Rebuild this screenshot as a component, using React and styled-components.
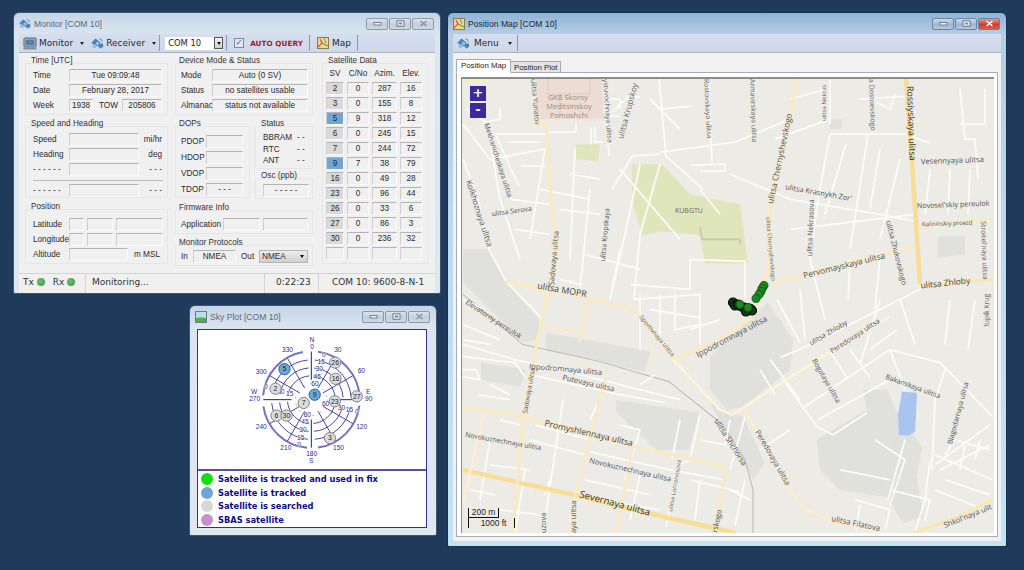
import React from "react";
import styled, { createGlobalStyle } from "styled-components";

const GlobalStyle = createGlobalStyle`
  html, body { margin: 0; padding: 0; }
  body {
    width: 1024px;
    height: 570px;
    overflow: hidden;
    background: #1f3a5a;
    font-family: "Liberation Sans", Arial, sans-serif;
  }
`;

const Desktop = styled.div`
  position: relative;
  width: 1024px;
  height: 570px;
  background: #1f3a5a;
`;

const Win = styled.section`
  position: absolute;
  left: ${(p) => p.$x}px;
  top: ${(p) => p.$y}px;
  width: ${(p) => p.$w}px;
  height: ${(p) => p.$h}px;
  box-sizing: border-box;
  padding: 0 5px 5px;
  display: flex;
  flex-direction: column;
  border-radius: 6px 6px 2px 2px;
  border: 1px solid ${(p) => (p.$active ? "#16304f" : "#3d5670")};
  background: ${(p) =>
    p.$active
      ? "linear-gradient(180deg, #8fb2d6 0, #b5cde4 20px, #bfdcef 50%, #c3e4f2 100%)"
      : "linear-gradient(180deg, #c5d5e6 0, #dbe5f0 22px, #dfe8f1 100%)"};
`;

const TitleBar = styled.header`
  height: 21px;
  flex: none;
  display: flex;
  align-items: center;
  gap: 3px;
  font-size: 8.6px;
  color: ${(p) => (p.$active ? "#1b2a3a" : "#5d6b7a")};
`;

const Controls = styled.div`
  margin-left: auto;
  display: flex;
  gap: 1px;
  margin-right: 1px;
`;

const Ctl = styled.div`
  width: 22px;
  height: 12px;
  display: flex;
  align-items: center;
  justify-content: center;
  border: 1px solid ${(p) => (p.$active ? "#6a84a3" : "#8c9aab")};
  border-radius: 2px;
  box-sizing: border-box;
  background: ${(p) =>
    p.$close
      ? "linear-gradient(180deg, #e89a88, #c9402c 55%, #d9604a)"
      : p.$active
      ? "linear-gradient(180deg, #c8d9ea, #9db8d4 55%, #b3c9df)"
      : "linear-gradient(180deg, #dbe3ec, #c3cfdc 55%, #cfd9e4)"};
`;

const Toolbar = styled.div`
  height: 19px;
  flex: none;
  display: flex;
  align-items: center;
  padding-left: 4px;
  background: linear-gradient(180deg, #d5deee, #cdd8ea);
  border-bottom: 1px solid #a9b2bd;
  box-sizing: border-box;
  font-family: "DejaVu Sans", sans-serif;
  font-size: 9px;
  color: #1c2a44;
`;

const ToolItem = styled.div`
  display: flex;
  align-items: center;
  gap: ${(p) => p.$gap ?? 2}px;
  margin-left: ${(p) => p.$ml ?? 0}px;
`;

const Caret = styled.span`
  width: 0;
  height: 0;
  margin-left: 5px;
  border-left: 2.5px solid transparent;
  border-right: 2.5px solid transparent;
  border-top: 3px solid #222;
`;

const ToolSep = styled.div`
  width: 1px;
  height: 16px;
  background: #8f9aa8;
  margin-left: ${(p) => p.$ml ?? 0}px;
`;

const ComSelect = styled.div`
  width: 58px;
  height: 13px;
  margin-left: 5px;
  background: #fff;
  display: flex;
  align-items: center;
  padding-left: 3px;
  box-sizing: border-box;
  font-family: "DejaVu Sans", sans-serif;
  font-size: 8.4px;
  color: #222;
  justify-content: space-between;
`;

const DropBtn = styled.span`
  width: 9px;
  height: 12px;
  background: linear-gradient(180deg, #f4f4f4, #cfcfcf);
  border: 1px solid #555;
  box-sizing: border-box;
  display: flex;
  align-items: center;
  justify-content: center;
  &::after {
    content: "";
    border-left: 2.5px solid transparent;
    border-right: 2.5px solid transparent;
    border-top: 3px solid #111;
  }
`;

const Check = styled.span`
  width: 10px;
  height: 10px;
  box-sizing: border-box;
  border: 1px solid #7f8a9c;
  background: #dfe6f2;
  color: #33508a;
  display: flex;
  align-items: center;
  justify-content: center;
  font-size: 8px;
  line-height: 1;
  font-family: "DejaVu Sans", sans-serif;
`;

const AutoQuery = styled.span`
  font-family: "DejaVu Sans", sans-serif;
  font-weight: 700;
  font-size: 7.2px;
  color: #9c1c24;
  letter-spacing: 0.1px;
`;

const MonitorBody = styled.div`
  height: 220px;
  flex: none;
  background: #f0f0f0;
  box-sizing: border-box;
  padding: 10px 5px 0 6px;
  display: grid;
  grid-template-columns: 143px 138px 108px;
  column-gap: 7px;
  font-size: 8.2px;
  color: #2b2b2b;
`;

const Col = styled.div`
  display: flex;
  flex-direction: column;
  gap: ${(p) => p.$gap ?? 11}px;
`;

const ColRow = styled.div`
  display: flex;
  gap: 5px;
`;

const Group = styled.div`
  border: 1px solid #e6e6e6;
  box-sizing: border-box;
  height: ${(p) => p.$h}px;
  width: ${(p) => (p.$w ? `${p.$w}px` : "auto")};
  margin-left: ${(p) => p.$ml ?? 0}px;
  padding: 0 4px 0 ${(p) => p.$pl ?? 7}px;
  display: flex;
  flex-direction: column;
  gap: ${(p) => p.$rowGap ?? 2}px;
`;

const GroupTitle = styled.div`
  height: 10px;
  margin: -8px 0 ${(p) => p.$mb ?? 1}px -2px;
  line-height: 10px;
  white-space: nowrap;
  color: #333;
`;

const Row = styled.div`
  display: flex;
  align-items: center;
  height: ${(p) => p.$h ?? 13}px;
  gap: ${(p) => p.$gap ?? 0}px;
`;

const Label = styled.span`
  width: ${(p) => (p.$w ? `${p.$w}px` : "auto")};
  flex: none;
  white-space: nowrap;
  text-align: ${(p) => p.$align ?? "left"};
  margin-left: ${(p) => p.$ml ?? 0}px;
`;

const Field = styled.div`
  width: ${(p) => p.$w}px;
  height: 13px;
  flex: none;
  box-sizing: border-box;
  border-top: 1px solid #b4b4b4;
  border-left: 1px solid #cfcfcf;
  border-right: 1px solid #fafafa;
  border-bottom: 1px solid #fafafa;
  background: ${(p) => (p.$bg ? p.$bg : "#f0f0f0")};
  display: flex;
  align-items: center;
  justify-content: center;
  white-space: nowrap;
  color: #2b2b2b;
`;

const Divider = styled.div`
  height: 1px;
  background: #bcbcbc;
  margin: 2px 0 1px;
`;

const ProtoSelect = styled.div`
  width: 49px;
  height: 13px;
  margin-left: auto;
  box-sizing: border-box;
  border: 1px solid #b5b5b5;
  background: linear-gradient(180deg, #eeeeee, #cfcfcf);
  display: flex;
  align-items: center;
  justify-content: space-between;
  padding: 0 3px 0 2px;
  &::after {
    content: "";
    border-left: 2.5px solid transparent;
    border-right: 2.5px solid transparent;
    border-top: 3px solid #111;
  }
`;

const SatGrid = styled.div`
  display: grid;
  grid-template-columns: 18px 22px 25px 22px;
  column-gap: 3px;
  row-gap: 2px;
  justify-content: start;
  margin-left: -4px;
`;

const SatHead = styled.div`
  text-align: center;
  height: 11px;
  line-height: 10px;
`;

const StatusBar = styled.footer`
  flex: none;
  height: 20px;
  background: #f0f0f0;
  border-top: 1px solid #d2d2d2;
  display: flex;
  align-items: stretch;
  box-sizing: border-box;
  font-family: "DejaVu Sans", sans-serif;
  font-size: 9px;
  color: #333;
`;

const StatusCell = styled.div`
  width: ${(p) => p.$w}px;
  flex: none;
  display: flex;
  align-items: center;
  gap: 3px;
  box-sizing: border-box;
  padding-left: ${(p) => p.$pl ?? 0}px;
  padding-bottom: 3px;
  border-right: ${(p) => (p.$last ? "none" : "1px solid #d4d4d4")};
`;

const Led = styled.span`
  width: 8px;
  height: 8px;
  border-radius: 50%;
  margin-right: 5px;
  background: radial-gradient(circle at 40% 40%, #6bbf6b, #3a9440);
`;

const SkyPanel = styled.div`
  flex: 1;
  display: flex;
  flex-direction: column;
  margin: 2px 4px 2px 2px;
  background: #fff;
  border: 1px solid #3b2f96;
`;

const SkyChart = styled.svg`
  display: block;
  width: 228px;
  height: 139px;
  flex: none;
  font-family: "Liberation Sans", sans-serif;
`;

const Legend = styled.ul`
  list-style: none;
  margin: 0;
  padding: 1px 0 0 3px;
  flex: 1;
  border-top: 2px solid #5a50ac;
  display: flex;
  flex-direction: column;
  justify-content: space-around;
`;

const LegendItem = styled.li`
  display: flex;
  align-items: center;
  gap: 5px;
  height: 13px;
  font-family: "DejaVu Sans", sans-serif;
  font-weight: 700;
  font-size: 8.3px;
  color: #0d0d86;
  white-space: nowrap;
`;

const Swatch = styled.span`
  width: 12px;
  height: 12px;
  border-radius: 50%;
  background: ${(p) => p.$c};
  flex: none;
`;

const MapBody = styled.div`
  flex: 1;
  background: #f1f1f1;
  padding: 6px 3px 4px 3px;
  display: flex;
  flex-direction: column;
  min-height: 0;
`;

const Tabs = styled.div`
  display: flex;
  align-items: flex-end;
  height: 14px;
  flex: none;
  position: relative;
  z-index: 1;
`;

const Tab = styled.div`
  height: ${(p) => (p.$on ? 14 : 12)}px;
  box-sizing: border-box;
  padding: 0 ${(p) => (p.$on ? 4 : 3)}px;
  border: 1px solid #a8acb2;
  border-bottom: ${(p) => (p.$on ? "1px solid #fff" : "1px solid #a8acb2")};
  border-left: ${(p) => (p.$on ? "1px solid #a8acb2" : "none")};
  background: ${(p) => (p.$on ? "#fff" : "#e4e4e4")};
  font-size: 7.8px;
  line-height: 11px;
  color: #222;
`;

const TabPage = styled.div`
  flex: 1;
  margin-top: -1px;
  background: #fff;
  border: 1px solid #a8acb2;
  padding: 4px 3px 3px 4px;
  display: flex;
  min-height: 0;
`;

const MapFrame = styled.div`
  position: relative;
  flex: 1;
  overflow: hidden;
  background: #ecebe6;
  border-top: 2px solid #8c8c8c;
  border-left: 1px solid #8c8c8c;
`;

const MapSvg = styled.svg`
  display: block;
  width: 100%;
  height: 100%;
  font-family: "Open Sans", "Liberation Sans", sans-serif;
`;

const ZoomBtn = styled.div`
  position: absolute;
  left: 8px;
  top: ${(p) => p.$t}px;
  width: 16px;
  height: 15px;
  background: #3b2a9e;
  color: #fff;
  font-family: "DejaVu Sans", sans-serif;
  font-weight: 700;
  font-size: 13px;
  line-height: 14px;
  text-align: center;
`;

const ScaleBar = styled.div`
  position: absolute;
  left: 6px;
  bottom: 5px;
  width: 48px;
  height: 20px;
  font-size: 8.4px;
  color: #222;
`;

const ScaleTop = styled.div`
  width: 31px;
  height: 10px;
  box-sizing: border-box;
  border-left: 1px solid #111;
  border-right: 1px solid #111;
  border-bottom: 1px solid #111;
  line-height: 9px;
  text-align: center;
`;

const ScaleBottom = styled.div`
  width: 47px;
  height: 10px;
  box-sizing: border-box;
  border-left: 1px solid #111;
  border-right: 1px solid #111;
  line-height: 10px;
  text-align: center;
  padding-left: 4px;
`;

/* ---- small drawings ---- */

const SatIcon = ({ size = 13 }) => (
  <svg width={size} height={size} viewBox="0 0 14 14">
    <path d="M1 6 L5 2 L7 4 L3 8 Z" fill="#4a8cc8" stroke="#1e5a96" strokeWidth="0.6" />
    <path d="M8 9 L12 7 L13 10 L10 12 Z" fill="#4a8cc8" stroke="#1e5a96" strokeWidth="0.6" />
    <circle cx="7" cy="7" r="2.6" fill="#8cc0ea" stroke="#1e5a96" strokeWidth="0.7" />
    <path d="M5 11 Q2 11 2 9 M9 2 Q12 2 12 5" fill="none" stroke="#3b7ab8" strokeWidth="0.9" />
  </svg>
);

const PcIcon = () => (
  <svg width="14" height="13" viewBox="0 0 14 13">
    <rect x="1" y="1" width="12" height="9" rx="1" fill="#b9bec6" stroke="#555c68" />
    <rect x="2.5" y="2.5" width="9" height="6" fill="#4f7fb4" />
    <rect x="0.5" y="10.5" width="13" height="2" fill="#8a8f98" />
  </svg>
);

const MapIcon = () => (
  <svg width="12" height="12" viewBox="0 0 12 12">
    <rect x="0.5" y="0.5" width="11" height="11" fill="#f2d68c" stroke="#8a7a58" />
    <path d="M1 10 L5 6 L3 2" fill="none" stroke="#d2553a" strokeWidth="1.2" />
    <path d="M5 6 L11 9" stroke="#5aa04a" strokeWidth="1.2" />
    <path d="M7 1 L9 6" stroke="#6a8ac8" strokeWidth="1" />
  </svg>
);

const SkyIcon = () => (
  <svg width="12" height="12" viewBox="0 0 12 12">
    <rect x="0.5" y="0.5" width="11" height="11" fill="#bcdcf2" stroke="#6a7a8a" />
    <rect x="1" y="7" width="10" height="4" fill="#4fb04a" />
    <path d="M1 7 Q6 4 11 7" fill="#8ccf70" />
  </svg>
);

const WinButtons = ({ active }) => (
  <Controls>
    <Ctl $active={active}>
      <svg width="9" height="5" viewBox="0 0 9 5">
        <rect x="1" y="1.5" width="7" height="2.5" fill="#eef2f6" stroke="#55606e" strokeWidth="0.7" />
      </svg>
    </Ctl>
    <Ctl $active={active}>
      <svg width="9" height="7" viewBox="0 0 9 7">
        <rect x="1" y="0.8" width="7" height="5.4" fill="#eef2f6" stroke="#55606e" strokeWidth="0.8" />
        <rect x="2.8" y="2.5" width="3.4" height="2" fill="#7f8a98" />
      </svg>
    </Ctl>
    <Ctl $active={active} $close={active}>
      <svg width="9" height="7" viewBox="0 0 9 7">
        <path
          d="M1.5 1 L7.5 6 M7.5 1 L1.5 6"
          stroke={active ? "#fff" : "#8793a2"}
          strokeWidth="1.5"
        />
      </svg>
    </Ctl>
  </Controls>
);

/* ---- monitor window ---- */

const satRows = [
  ["2", "0", "287", "16"],
  ["3", "0", "155", "8"],
  ["5", "9", "318", "12", true],
  ["6", "0", "245", "15"],
  ["7", "0", "244", "72"],
  ["9", "7", "38", "79", true],
  ["16", "0", "49", "28"],
  ["23", "0", "96", "44"],
  ["26", "0", "33", "6"],
  ["27", "0", "86", "3"],
  ["30", "0", "236", "32"],
  ["", "", "", ""],
];

const MonitorWindow = () => (
  <Win $x={13} $y={12} $w={428} $h={282}>
    <TitleBar>
      <SatIcon size={12} />
      Monitor [COM 10]
      <WinButtons />
    </TitleBar>
    <Toolbar>
      <ToolItem>
        <PcIcon />
        Monitor
        <Caret />
      </ToolItem>
      <ToolItem $ml={7}>
        <SatIcon />
        Receiver
        <Caret />
      </ToolItem>
      <ToolSep $ml={3} />
      <ComSelect>
        COM 10
        <DropBtn />
      </ComSelect>
      <ToolSep $ml={3} />
      <ToolItem $ml={7} $gap={6}>
        <Check>✓</Check>
        <AutoQuery>AUTO QUERY</AutoQuery>
      </ToolItem>
      <ToolSep $ml={6} />
      <ToolItem $ml={7} $gap={3}>
        <MapIcon />
        Map
      </ToolItem>
      <ToolSep $ml={6} />
    </Toolbar>
    <MonitorBody>
      <Col>
        <Group $h={52}>
          <GroupTitle>Time [UTC]</GroupTitle>
          <Row>
            <Label $w={36}>Time</Label>
            <Field $w={93}>Tue 09:09:48</Field>
          </Row>
          <Row>
            <Label $w={36}>Date</Label>
            <Field $w={93}>February 28, 2017</Field>
          </Row>
          <Row>
            <Label $w={36}>Week</Label>
            <Field $w={24}>1938</Field>
            <Label $ml={6} $w={23}>TOW</Label>
            <Field $w={40}>205806</Field>
          </Row>
        </Group>
        <Group $h={72}>
          <GroupTitle $mb={2}>Speed and Heading</GroupTitle>
          <Row>
            <Label $w={36}>Speed</Label>
            <Field $w={70} />
            <Label $w={23} $align="right">mi/hr</Label>
          </Row>
          <Row>
            <Label $w={36}>Heading</Label>
            <Field $w={70} />
            <Label $w={23} $align="right">deg</Label>
          </Row>
          <Row>
            <Label $w={36}>- - - - - -</Label>
            <Field $w={70} />
            <Label $w={23} $align="right">- - -</Label>
          </Row>
          <Divider />
          <Row>
            <Label $w={36}>- - - - - -</Label>
            <Field $w={70} />
            <Label $w={23} $align="right">- - -</Label>
          </Row>
        </Group>
        <Group $h={55}>
          <GroupTitle $mb={4}>Position</GroupTitle>
          <Row $gap={3}>
            <Label $w={33}>Latitude</Label>
            <Field $w={15} />
            <Field $w={26} />
            <Field $w={47} />
          </Row>
          <Row $gap={3}>
            <Label $w={33}>Longitude</Label>
            <Field $w={15} />
            <Field $w={26} />
            <Field $w={47} />
          </Row>
          <Row>
            <Label $w={36}>Altitude</Label>
            <Field $w={59} />
            <Label $ml={6}>m MSL</Label>
          </Row>
        </Group>
      </Col>
      <Col>
        <Group $h={52} $pl={5}>
          <GroupTitle>Device Mode &amp; Status</GroupTitle>
          <Row>
            <Label $w={31}>Mode</Label>
            <Field $w={96}>Auto (0 SV)</Field>
          </Row>
          <Row>
            <Label $w={31}>Status</Label>
            <Field $w={96}>no satellites usable</Field>
          </Row>
          <Row>
            <Label $w={31}>Almanac</Label>
            <Field $w={96}>status not available</Field>
          </Row>
        </Group>
        <ColRow>
          <Group $h={72} $w={75} $rowGap={3} $pl={5}>
            <GroupTitle $mb={3}>DOPs</GroupTitle>
            <Row>
              <Label $w={25}>PDOP</Label>
              <Field $w={37} />
            </Row>
            <Row>
              <Label $w={25}>HDOP</Label>
              <Field $w={37} />
            </Row>
            <Row>
              <Label $w={25}>VDOP</Label>
              <Field $w={37} />
            </Row>
            <Row>
              <Label $w={25}>TDOP</Label>
              <Field $w={37}>- - -</Field>
            </Row>
          </Group>
          <Col $gap={9}>
            <Group $h={43} $w={58} $rowGap={0}>
              <GroupTitle $mb={3}>Status</GroupTitle>
              <Row $h={11.5}>
                <Label $w={34}>BBRAM</Label>
                <Label>- -</Label>
              </Row>
              <Row $h={11.5}>
                <Label $w={34}>RTC</Label>
                <Label>- -</Label>
              </Row>
              <Row $h={11.5}>
                <Label $w={34}>ANT</Label>
                <Label>- -</Label>
              </Row>
            </Group>
            <Group $h={21} $w={58}>
              <GroupTitle>Osc (ppb)</GroupTitle>
              <Row>
                <Field $w={46}>- - - - -</Field>
              </Row>
            </Group>
          </Col>
        </ColRow>
        <Group $h={24} $pl={5}>
          <GroupTitle $mb={3}>Firmware Info</GroupTitle>
          <Row $gap={3}>
            <Label $w={39}>Application</Label>
            <Field $w={37} />
            <Field $w={45} />
          </Row>
        </Group>
        <Group $h={21} $pl={5}>
          <GroupTitle $mb={0}>Monitor Protocols</GroupTitle>
          <Row>
            <Label $w={12}>In</Label>
            <Field $w={43}>NMEA</Field>
            <Label $ml={5}>Out</Label>
            <ProtoSelect>NMEA</ProtoSelect>
          </Row>
        </Group>
      </Col>
      <Group $h={201} $ml={2}>
        <GroupTitle>Satellite Data</GroupTitle>
        <SatGrid>
          <SatHead>SV</SatHead>
          <SatHead>C/No</SatHead>
          <SatHead>Azim.</SatHead>
          <SatHead>Elev.</SatHead>
          {satRows.map((r, i) => (
            <React.Fragment key={i}>
              <Field $w={18} $bg={r[4] ? "#6fa6d4" : r[0] ? "#d9d9d9" : undefined}>{r[0]}</Field>
              <Field $w={22}>{r[1]}</Field>
              <Field $w={25}>{r[2]}</Field>
              <Field $w={22}>{r[3]}</Field>
            </React.Fragment>
          ))}
        </SatGrid>
      </Group>
    </MonitorBody>
    <StatusBar>
      <StatusCell $w={67} $pl={4}>
        Tx <Led /> Rx <Led />
      </StatusCell>
      <StatusCell $w={179} $pl={6}>Monitoring...</StatusCell>
      <StatusCell $w={54} $pl={11}>0:22:23</StatusCell>
      <StatusCell $w={110} $pl={13} $last>COM 10: 9600-8-N-1</StatusCell>
    </StatusBar>
  </Win>
);

/* ---- sky plot window ---- */

const CX = 370;
const CY = 285;
const polar = (r, deg) => {
  const a = ((deg - 90) * Math.PI) / 180;
  return [CX + r * Math.cos(a), CY + r * Math.sin(a)];
};
const arc = (r, from, to) => {
  const [x1, y1] = polar(r, from);
  const [x2, y2] = polar(r, to);
  return `M${x1} ${y1} A${r} ${r} 0 ${to - from > 180 ? 1 : 0} 1 ${x2} ${y2}`;
};

const skySats = [
  [26, 442, 173],
  [16, 443, 222],
  [5, 289, 193, true],
  [2, 262, 252],
  [27, 507, 275],
  [23, 441, 290],
  [7, 347, 295],
  [9, 380, 270, true],
  [6, 265, 333],
  [30, 295, 333],
  [3, 426, 401],
];

const skyLabels = [
  ["N", 372, 105], ["0", 372, 125], ["330", 298, 135], ["30", 450, 135], ["60", 521, 199],
  ["300", 219, 200], ["W", 197, 262], ["270", 199, 283], ["E", 542, 261], ["90", 543, 283],
  ["240", 219, 367], ["120", 522, 367], ["210", 293, 430], ["150", 452, 430], ["180", 371, 448],
  ["S", 370, 470], ["0", 408, 148], ["15", 400, 170], ["30", 394, 192], ["45", 388, 217],
  ["60", 381, 238], ["0", 233, 246], ["0", 283, 260], ["15", 305, 268], ["0", 333, 421],
  ["15", 338, 400], ["30", 345, 375], ["45", 351, 352], ["60", 358, 330], ["60", 413, 297],
  ["30", 461, 309], ["15", 485, 316], ["0", 507, 322],
];

const SkyPlot = () => (
  <SkyChart viewBox="28 76 688 417">
    {[
      [8, 88],
      [97, 172],
      [185, 262],
      [275, 350],
    ].map(([a, b], i) => (
      <path key={i} d={arc(146, a, b)} fill="none" stroke="#7a72c0" strokeWidth="6" />
    ))}
    {[120, 96, 72].map((r) =>
      [
        [5, 86],
        [100, 175],
        [185, 265],
        [280, 355],
      ].map(([a, b]) => (
        <path key={`${r}-${a}`} d={arc(r, a, b)} fill="none" stroke="#2f2a8c" strokeWidth="2.6" />
      ))
    )}
    <circle cx={CX} cy={CY} r="48" fill="none" stroke="#8a86c8" strokeWidth="2" strokeDasharray="6 16" />
    <path
      d="M370 140V225 M370 345V430 M225 285H310 M440 285H515"
      stroke="#221e86"
      strokeWidth="3"
    />
    {[30, 60, 120, 150, 210, 240, 300, 330].map((d) => {
      const [x1, y1] = polar(144, d);
      const [x2, y2] = polar(40, d);
      return <line key={d} x1={x1} y1={y1} x2={x2} y2={y2} stroke="#2f2a8c" strokeWidth="2.6" />;
    })}
    {skyLabels.map(([t, x, y], i) => (
      <text key={i} x={x} y={y + 7} textAnchor="middle" fontSize="20" fill="#2d2a8c" stroke="#fff" strokeWidth="2" paintOrder="stroke">
        {t}
      </text>
    ))}
    {skySats.map(([n, x, y, on]) => (
      <g key={n}>
        <circle cx={x} cy={y} r="17" fill={on ? "#6ea6d4" : "#dcdcdc"} stroke={on ? "#2a5f94" : "#807f8c"} strokeWidth="3" />
        <text x={x} y={y + 7} textAnchor="middle" fontSize="21" fill="#222">{n}</text>
      </g>
    ))}
  </SkyChart>
);

const SkyWindow = () => (
  <Win $x={189} $y={305} $w={248} $h={231}>
    <TitleBar>
      <SkyIcon />
      Sky Plot [COM 10]
      <WinButtons />
    </TitleBar>
    <SkyPanel>
      <SkyPlot />
      <Legend>
        <LegendItem><Swatch $c="#10e010" />Satellite is tracked and used in fix</LegendItem>
        <LegendItem><Swatch $c="#6ea6d4" />Satellite is tracked</LegendItem>
        <LegendItem><Swatch $c="#d8d8d8" />Satellite is searched</LegendItem>
        <LegendItem><Swatch $c="#cc8cd0" />SBAS satellite</LegendItem>
      </Legend>
    </SkyPanel>
  </Win>
);

/* ---- map window ---- */

const grayAreas = [
  "463,250 489,250 506,283 539,320 538,340 523,343 463,283",
  "546,333 650,352 645,372 546,350",
  "481,363 526,370 520,387 481,380",
  "616,400 699,413 689,450 656,450 616,412",
  "768,303 793,340 790,370 743,407 727,410 710,390 710,357",
  "710,403 743,417 765,463 753,480 730,440",
  "817,440 867,410 897,412 922,447 917,477 923,517 903,523 887,497 840,490 820,470",
  "863,390 887,390 897,413 867,410",
  "830,120 842,120 842,130 830,130",
  "938,237 965,237 965,255 938,258",
];

const yellowRoads = [
  ["M906 80 L912 163 L920 285", 4.5, "#f9dd95"],
  ["M463 470 L583 497 L669 518 L736 533", 4.5, "#f9dd95"],
  ["M913 533 L955 518 L993 500", 3, "#fae6b0"],
  ["M797 80 L789 120 L770 210 L768 270 L752 318 L720 340 L672 360", 3, "#fbeac0"],
  ["M772 283 L915 247", 3, "#fbeac0"],
  ["M920 226 L993 221", 3, "#fbeac0"],
  ["M920 286 L993 280", 3, "#fae6b0"],
  ["M506 282 L583 297 L634 310 L673 357", 3, "#fbeac0"],
  ["M533 123 L546 125 L550 190 L558 250 L539 333 L523 417 L513 533", 3, "#fbeac0"],
  ["M463 407 L523 417 L629 445 L726 467", 3, "#fbeac0"],
  ["M546 327 L583 333 M588 300 L579 343", 2.5, "#fbeac0"],
  ["M606 377 L576 490 L570 533", 2.5, "#fbeac0"],
  ["M633 447 L616 533", 2.5, "#fbeac0"],
  ["M726 467 L715 533", 2.5, "#fbeac0"],
  ["M484 413 L463 503", 2.5, "#fdf0d0"],
  ["M673 360 L720 410 L733 415 L743 408 L830 352 L890 317", 2.5, "#fff3d8"],
  ["M743 408 L790 490 L806 510 L830 520 L890 535", 2.5, "#fdeecb"],
  ["M463 80 L485 84", 2.5, "#fbeac0"],
];

const whiteRoads = [
  "M463 160 L478 200 L489 250 L506 282 L543 320",
  "M806 347 L920 290",
  "M780 358 L806 347",
  "M777 300 L800 343",
  "M803 408 L890 350 L940 363 L993 417",
  "M783 380 L817 427 L833 435 L867 413",
  "M818 420 L890 380",
  "M830 352 L847 378 M850 350 L870 378 M870 350 L897 330",
  "M890 350 L905 390",
  "M905 440 L888 500",
  "M945 370 L935 400 L932 470",
  "M935 465 L990 425",
  "M935 455 L993 480 M945 480 L990 495 M935 490 L985 510",
  "M940 470 L990 445 M945 455 L955 440 L990 450 M960 470 L965 445 M975 460 L980 440",
  "M930 460 L925 500 L915 532",
  "M890 490 L930 500 L925 520",
  "M855 500 L890 510 L885 530 M860 505 L856 530",
  "M760 450 L790 430",
  "M880 300 L860 365",
  "M960 90 L965 140 L975 140 L978 180 M960 125 L985 125 L985 90",
  "M830 135 L906 135 L930 144",
  "M830 135 L818 200",
  "M818 200 L810 260 L825 320",
  "M790 230 L915 215",
  "M730 175 L790 200 L880 215 L915 222",
  "M868 135 L850 250",
  "M900 160 L880 240",
  "M846 145 L825 215",
  "M775 140 L830 120",
  "M860 100 L906 97 M870 100 L890 110 L895 95",
  "M790 100 L826 90 M830 80 L830 125",
  "M708 80 L711 140 L712 163 M690 166 L725 165 L725 172 L700 172",
  "M659 80 L666 157 L703 190",
  "M660 110 L692 107 M660 153 L735 143 L790 120",
  "M603 80 L609 157",
  "M610 117 L620 117 M610 100 L620 100 L620 110 M625 98 L640 98 M612 113 L628 98",
  "M595 128 L595 143 L603 143 M591 128 L591 145",
  "M549 133 L576 133 L576 125",
  "M640 165 L625 235 L610 300",
  "M590 190 L580 290",
  "M660 165 L640 235 L634 300",
  "M612 190 L632 157 L660 155",
  "M463 125 L490 160 L545 150",
  "M466 110 L486 123 L500 120 L500 110",
  "M486 135 L546 135",
  "M496 137 L519 187",
  "M509 143 L539 143 M521 167 L545 167",
  "M490 140 L500 200 L520 260",
  "M545 150 L530 240",
  "M510 200 L550 205",
  "M515 230 L550 235",
  "M600 180 L570 175 M600 215 L560 210",
  "M585 255 L640 270 M560 280 L580 285",
  "M634 300 L700 295 L700 345 M640 295 L640 350 M660 295 L660 340 M675 295 L675 330 L700 325",
  "M630 285 L690 290 M650 310 L700 318 M690 330 L720 320",
  "M690 260 L745 262 L745 300 M690 260 L690 290",
  "M463 345 L515 360 L600 380 L680 400",
  "M463 340 L491 345 M463 357 L515 363 L525 377",
  "M463 370 L476 370 L480 380 L463 377",
  "M490 385 L510 395 M478 395 L510 400",
  "M530 375 L620 395 L665 403",
  "M563 400 L543 533",
  "M535 425 L590 440 M530 440 L585 455",
  "M490 465 L530 470 M470 490 L495 495",
  "M545 495 L550 480 M590 420 L597 405",
  "M590 452 L670 470 L725 480 M585 480 L650 495",
  "M679 460 L666 527 M745 417 L730 470",
  "M700 415 L690 460 L680 465",
  "M700 480 L695 520 M745 480 L735 525 M730 490 L750 500",
  "M700 440 L725 445 L730 420",
  "M620 425 L640 430 L625 480",
  "M640 385 L655 375 M680 420 L672 460",
  "M540 190 L590 200",
  "M463 300 L485 310",
  "M463 325 L500 340",
  "M525 470 L515 533",
  "M600 500 L660 510",
  "M840 470 L890 480",
  "M875 440 L905 460 L890 505",
  "M575 150 L570 260 M620 250 L612 290",
  "M620 170 L680 240 M700 190 L720 215 M650 100 L680 130",
  "M770 360 L800 400 M760 370 L775 395",
  "M950 300 L945 345 M975 300 L968 350 M900 300 L915 345",
  "M880 150 L870 210 M930 170 L925 215 M950 170 L948 215 M970 170 L968 215",
  "M850 260 L848 300 M880 258 L875 310 M800 290 L805 340",
  "M490 440 L480 500 M500 420 L520 425 M500 510 L540 515",
  "M640 475 L630 520 M690 480 L740 492",
];

const mapLabels = [
  ["GKB Skoroy", 568, 101, 0, 7.4, "#9c8a82", "middle"],
  ["Meditsinskoy", 569, 110, 0, 7.4, "#9c8a82", "middle"],
  ["Pomoshchi", 569, 119, 0, 7.4, "#9c8a82", "middle"],
  ["KUBGTU", 675, 214, 0, 7, "#666"],
  ["ulitsa Yunatov", 531, 80, 85, 7, "#666"],
  ["ystuvochnaya ulitsa", 603, 80, 86, 7, "#666"],
  ["ulitsa Krupskoy", 623, 140, -75, 8, "#666"],
  ["Rostovskaya ulitsa", 704, 80, 87, 7, "#666"],
  ["Armavirskaya ulitsa", 750, 80, 88, 7, "#666"],
  ["ulitsa Chernyshevskogo", 773, 205, -78, 8.4, "#555"],
  ["ulitsa Nekras", 826, 122, -90, 6, "#666"],
  ["a Dostoevskogo", 869, 80, 88, 7, "#666"],
  ["Rossiyskaya ulitsa", 907, 87, 88, 9, "#333"],
  ["Vesennyaya ulitsa", 921, 165, -2, 7.6, "#555"],
  ["ulitsa Krasnykh Zor'", 785, 190, 10, 7.4, "#555"],
  ["Novosel'skiy pereulok", 917, 209, -2, 7.2, "#555"],
  ["Kalininskiy proezd", 922, 227, -2, 6, "#555"],
  ["Stroitel'naya ulitsa", 981, 222, 88, 6.8, "#666"],
  ["tupik Krug", 989, 327, -90, 6.8, "#666"],
  ["ulitsa Zhukovskogo", 886, 222, 76, 7.4, "#555"],
  ["ulitsa Nekrasova", 812, 257, -88, 7.4, "#555"],
  ["Pervomayskaya ulitsa", 804, 279, -14, 8.4, "#555"],
  ["ulitsa Zhloby", 921, 289, -6, 8.4, "#444"],
  ["ulitsa Chernyshevskogo", 766, 218, 85, 5.8, "#666"],
  ["ulitsa Zhloby", 811, 346, -30, 7.2, "#555"],
  ["Peredovaya ulitsa", 832, 354, -33, 7, "#555"],
  ["Bogataya ulitsa", 812, 361, 60, 7, "#555"],
  ["Bakanskaya ulitsa", 885, 379, 20, 7, "#555"],
  ["Blagodarnaya ulitsa", 952, 445, -75, 7, "#555"],
  ["Peredovaya ulitsa", 755, 432, 60, 7.6, "#555"],
  ["ulitsa Shchorsa", 714, 421, 58, 7.6, "#555"],
  ["ulitsa Filatova", 831, 521, 12, 7.8, "#555"],
  ["Shkol'naya ulit", 945, 528, -22, 7.6, "#555"],
  ["Ippodromnaya ulitsa", 698, 358, -28, 8.2, "#555"],
  ["Ippodromnaya ulitsa", 529, 369, 5, 7.6, "#555"],
  ["Sportivnaya ulitsa", 639, 318, 50, 6.2, "#666"],
  ["ulitsa MOPR", 537, 289, 10, 8.8, "#444"],
  ["Elevatorny pereulok", 465, 304, 33, 7, "#555"],
  ["Putevaya ulitsa", 562, 380, 13, 7.6, "#555"],
  ["Sadovaya ulitsa", 527, 414, -80, 6.4, "#555"],
  ["Promyshlennaya ulitsa", 544, 426, 13, 8.6, "#444"],
  ["Novokuznechnaya ulitsa", 465, 437, 10, 6.8, "#555"],
  ["Novokuznechnaya ulitsa", 589, 463, 13, 7.4, "#555"],
  ["Severnaya ulitsa", 579, 497, 15, 9.6, "#333"],
  ["ulitsa Lomonosova", 672, 512, -80, 6, "#666"],
  ["uzova", 546, 533, -90, 7.4, "#555"],
  ["aya ulitsa", 576, 533, -90, 7.4, "#555"],
  ["rskogo", 717, 533, -78, 7.4, "#555"],
  ["Sadovaya ulitsa", 554, 286, -85, 7.6, "#555"],
  ["ulitsa Kropskaya", 605, 262, -85, 7, "#555"],
  ["Kolkhoznaya ulitsa", 466, 182, 72, 8, "#555"],
  ["Mekhanicheskaya ulitsa", 484, 125, 72, 7, "#555"],
  ["ulitsa Serova", 492, 217, -8, 6.8, "#555"],
];

const trackBlack = [
  [733, 303], [735, 306], [738, 305], [741, 307], [744, 308], [747, 309], [750, 309], [752, 311], [746, 312],
];
const trackGreen = [
  [764, 286], [762, 289], [761, 292], [759, 295], [756, 299], [740, 305], [748, 308],
];

const MapView = () => (
  <MapSvg viewBox="462 80 532 453" preserveAspectRatio="none">
    <rect x="462" y="80" width="532" height="453" fill="#ecebe6" />
    {grayAreas.map((p) => (
      <polygon key={p} points={p} fill="#e0e0dc" />
    ))}
    <rect x="536" y="80" width="67" height="40" fill="#ecdcd4" />
    <path d="M548 80 V95 H590 V80 M560 95 V118" fill="none" stroke="#e0cfc4" strokeWidth="1.5" />
    <polygon
      points="632,165 662,165 690,195 740,205 748,264 705,264 700,236 662,232 642,236 632,200"
      fill="#dfe6bc"
    />
    <polygon points="576,145 600,145 598,162 576,160" fill="#dfe6bc" />
    <path d="M700 228 L702 240 M702 240 H740 V245" fill="none" stroke="#cfc8b0" strokeWidth="2" />
    <polygon points="902,392 917,393 916,415 915,432 908,436 899,435 898,415" fill="#a9c4ee" />
    <path
      d="M463 295 L523 345 L600 362 L669 382 L723 425 L745 460 L753 490 L753 533"
      fill="none"
      stroke="#b8b8b4"
      strokeWidth="1"
    />
    {whiteRoads.map((d) => (
      <path key={d} d={d} fill="none" stroke="#fbfbf8" strokeWidth="1.8" strokeLinejoin="round" />
    ))}
    {yellowRoads.map(([d, w, c]) => (
      <path key={d} d={d} fill="none" stroke={c} strokeWidth={w} strokeLinejoin="round" />
    ))}
    {mapLabels.map(([t, x, y, r, s, c, anchor]) => (
      <text
        key={`${t}${x}`}
        x={x}
        y={y}
        fontSize={s}
        fill={c}
        textAnchor={anchor ?? "start"}
        transform={r ? `rotate(${r} ${x} ${y})` : undefined}
      >
        {t}
      </text>
    ))}
    {trackBlack.map(([x, y]) => (
      <circle key={`${x}-${y}`} cx={x} cy={y} r="4.5" fill="#0d3d10" stroke="#050505" strokeWidth="1.2" />
    ))}
    {trackGreen.map(([x, y]) => (
      <circle key={`${x}-${y}`} cx={x} cy={y} r="4" fill="#1a8c1c" stroke="#0e4a10" strokeWidth="0.8" />
    ))}
  </MapSvg>
);

const MapWindow = () => (
  <Win $x={447} $y={12} $w={560} $h={535} $active>
    <TitleBar $active>
      <MapIcon />
      Position Map [COM 10]
      <WinButtons active />
    </TitleBar>
    <Toolbar>
      <ToolItem $gap={4}>
        <SatIcon />
        Menu
        <Caret />
      </ToolItem>
      <ToolSep $ml={5} />
    </Toolbar>
    <MapBody>
      <Tabs>
        <Tab $on>Position Map</Tab>
        <Tab>Position Plot</Tab>
      </Tabs>
      <TabPage>
        <MapFrame>
          <MapView />
          <ZoomBtn $t={7}>+</ZoomBtn>
          <ZoomBtn $t={24}>-</ZoomBtn>
          <ScaleBar>
            <ScaleTop>200 m</ScaleTop>
            <ScaleBottom>1000 ft</ScaleBottom>
          </ScaleBar>
        </MapFrame>
      </TabPage>
    </MapBody>
  </Win>
);

export default function App() {
  return (
    <>
      <GlobalStyle />
      <Desktop>
        <MonitorWindow />
        <SkyWindow />
        <MapWindow />
      </Desktop>
    </>
  );
}
